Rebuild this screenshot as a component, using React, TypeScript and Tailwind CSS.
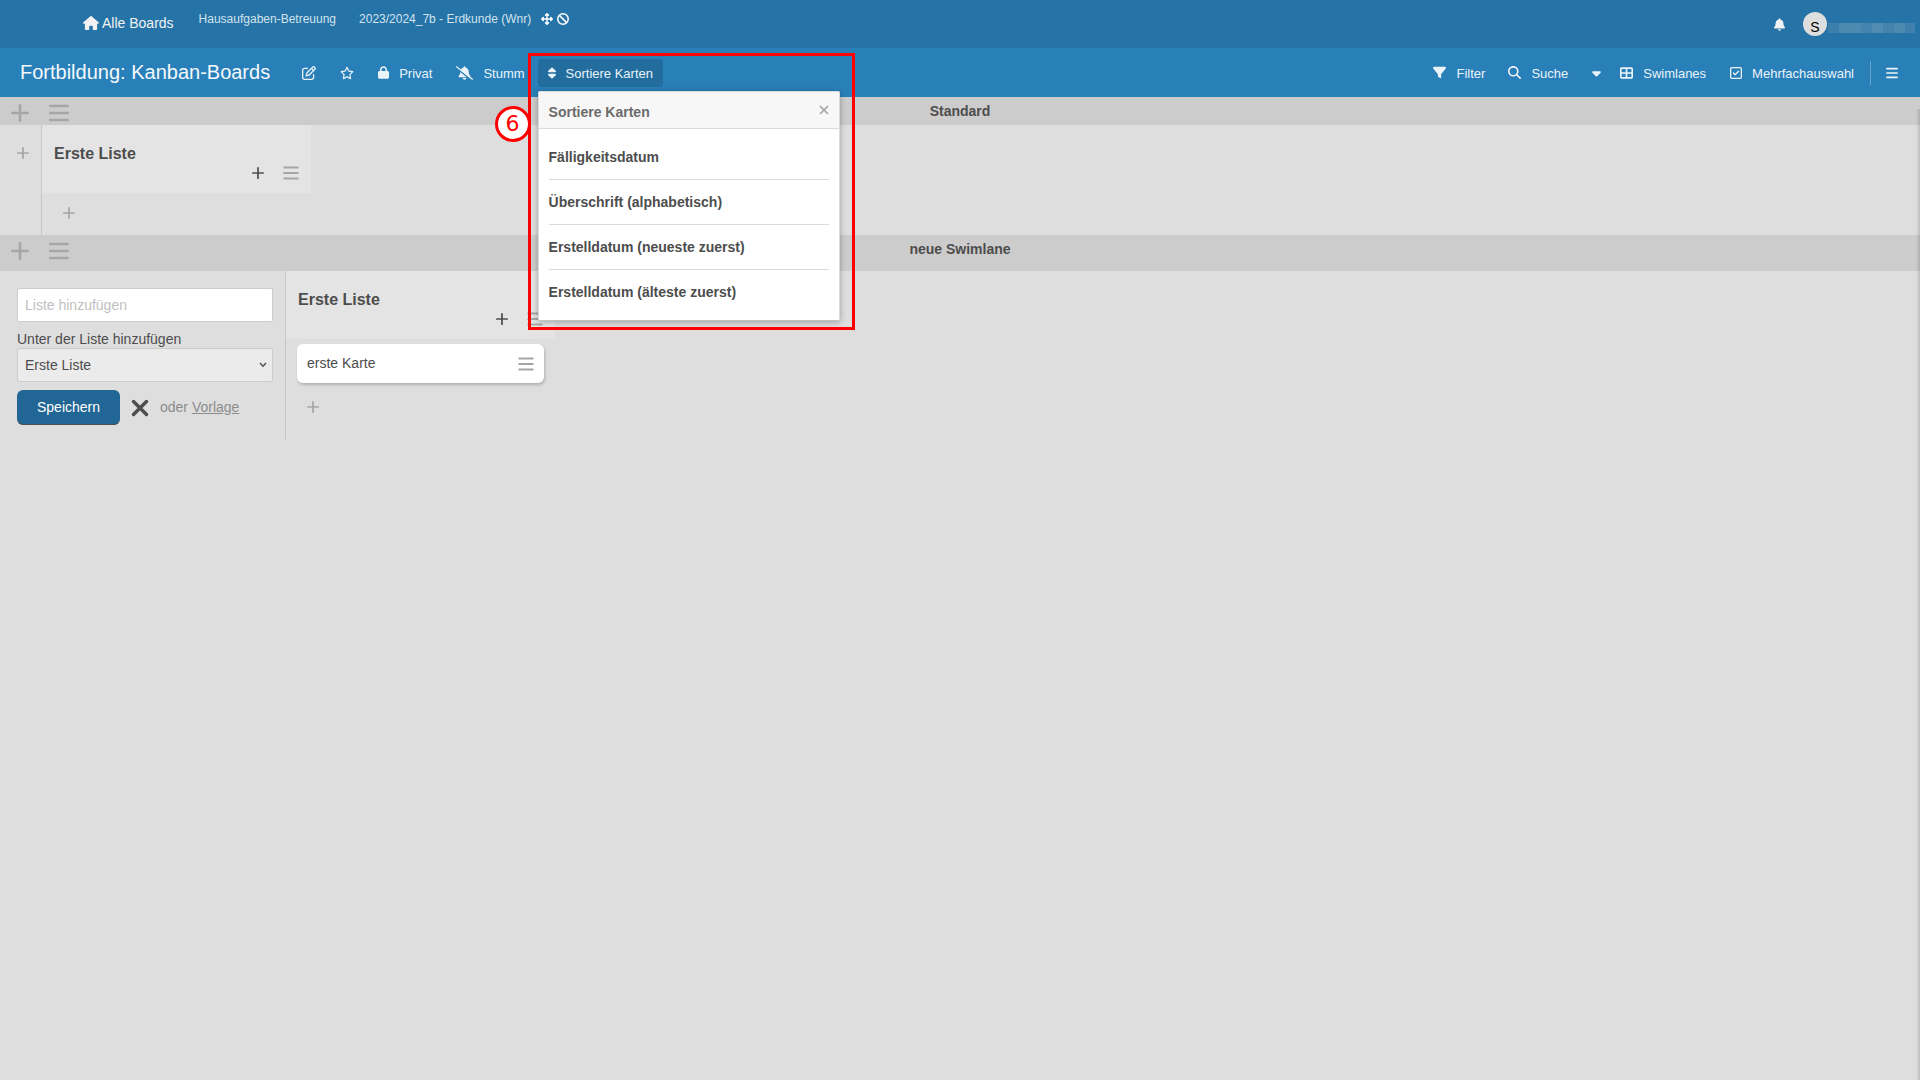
import type { ReactNode } from 'react';
import {
  FaArrowsUpDownLeftRight,
  FaBan,
  FaBars,
  FaBell,
  FaBellSlash,
  FaCaretDown,
  FaFilter,
  FaHouse,
  FaLock,
  FaMagnifyingGlass,
  FaRegPenToSquare,
  FaRegSquareCheck,
  FaRegStar,
  FaSort,
  FaTableCellsLarge,
} from 'react-icons/fa6';

const sortOptions = [
  'Fälligkeitsdatum',
  'Überschrift (alphabetisch)',
  'Erstelldatum (neueste zuerst)',
  'Erstelldatum (älteste zuerst)',
];

function PlusIcon({ className }: { className: string }) {
  return (
    <svg viewBox="0 0 18 18" className={className} fill="none" stroke="currentColor" strokeWidth="2.6" strokeLinecap="round">
      <path d="M9 1.3v15.4M1.3 9h15.4" />
    </svg>
  );
}

function MenuIcon({ className }: { className: string }) {
  return (
    <svg viewBox="0 0 20 18" className={className} fill="none" stroke="currentColor" strokeWidth="2.6" strokeLinecap="round">
      <path d="M1.3 2h17.4M1.3 9h17.4M1.3 16h17.4" />
    </svg>
  );
}

function HeaderButton({ icon, children, className = '' }: { icon: ReactNode; children?: ReactNode; className?: string }) {
  return (
    <button className={`flex h-7 items-center gap-2.5 rounded-sm px-2.5 ${className}`}>
      {icon}
      {children && <span className="pt-[3px]">{children}</span>}
    </button>
  );
}

function TopBar() {
  return (
    <nav className="flex h-12 items-start bg-[#2573a7] text-[#f2f2f2]">
      <a href="#boards" className="ml-[83px] flex items-center gap-[3px] pt-[11px] text-sm leading-6">
        <FaHouse className="h-3.5 w-4" />
        Alle Boards
      </a>
      <ul className="ml-[25px] flex items-center pt-[9px] text-xs leading-5 text-[#d3e3ee]">
        <li>
          <a href="#betreuung">Hausaufgaben-Betreuung</a>
        </li>
        <li className="ml-[23px]">
          <a href="#erdkunde">2023/2024_7b - Erdkunde (Wnr)</a>
        </li>
        <li className="ml-2.5 flex gap-1 text-white">
          <FaArrowsUpDownLeftRight className="size-3" />
          <FaBan className="size-3" />
        </li>
      </ul>
      <div className="ml-auto flex h-12 items-center pr-[5px]">
        <button aria-label="Benachrichtigungen" className="mr-[18px]">
          <FaBell className="h-[13px] w-[11px]" />
        </button>
        <span className="flex size-6 items-center justify-center rounded-full bg-[#dedede] pt-1.5 text-sm text-black">S</span>
        <span className="mt-2 ml-px flex h-2.5 w-[87px]">
          <span className="w-[11px] bg-[#3c7eac]" />
          <span className="w-[22px] bg-[#4d8ab2]" />
          <span className="w-[11px] bg-[#4583af]" />
          <span className="w-[11px] bg-[#4f8bb3]" />
          <span className="w-[11px] bg-[#4583af]" />
          <span className="w-[11px] bg-[#4d8ab2]" />
          <span className="w-2.5 bg-[#4080ac]" />
        </span>
      </div>
    </nav>
  );
}

function SortPopup() {
  return (
    <div className="absolute top-8 left-0 z-20 w-[302px] rounded-xs border border-[#dbdbdb] border-b-[#c2c2c2] bg-white text-sm font-bold text-[#4d4d4d] shadow-[0_1px_6px_rgba(0,0,0,0.3)]">
      <div className="flex h-[37px] items-center justify-between border-b border-[#dbdbdb] bg-[#f7f7f7] px-2.5">
        <h2 className="pt-1 text-[#6b6b6b]">Sortiere Karten</h2>
        <button aria-label="Schließen" className="text-[#a6a6a6]">
          <svg viewBox="0 0 10 10" className="size-2.5" stroke="currentColor" strokeWidth="1.7">
            <path d="M1 1l8 8M9 1l-8 8" />
          </svg>
        </button>
      </div>
      <ul className="divide-y divide-[#dbdbdb] px-2.5 pt-1.5 pb-1.5">
        {sortOptions.map((option) => (
          <li key={option}>
            <button className="flex h-11 w-full items-center">{option}</button>
          </li>
        ))}
      </ul>
      {/* Step marker around the opened menu */}
      <div className="pointer-events-none absolute -top-[39px] -left-[11px] h-[277px] w-[327px] border-3 border-[#f00]" />
      <div className="pointer-events-none absolute top-3.5 -left-11 flex size-9 items-center justify-center rounded-full border-3 border-[#f00] bg-white font-['DejaVu_Sans'] text-[22px] font-normal text-[#f00]">
        6
      </div>
    </div>
  );
}

function BoardHeader() {
  return (
    <header className="flex h-[49px] items-center bg-[#2980b9] text-[13px] text-[#eaf3f8]">
      <h1 className="mr-[22px] pb-0.5 pl-5 text-xl leading-6 text-[#f4f8fb]">Fortbildung: Kanban-Boards</h1>
      <HeaderButton icon={<FaRegPenToSquare className="size-3.5" />} className="mr-1" />
      <HeaderButton icon={<FaRegStar className="size-3.5" />} className="mr-1" />
      <HeaderButton icon={<FaLock className="h-[13px] w-[11px]" />} className="mr-1">Privat</HeaderButton>
      <HeaderButton icon={<FaBellSlash className="h-3.5 w-[17px]" />} className="mr-[3px]">Stumm</HeaderButton>
      <div className="relative">
        <HeaderButton icon={<FaSort className="h-3.5 w-2" />} className="bg-[#236d9e]">Sortiere Karten</HeaderButton>
        <SortPopup />
      </div>
      <div className="ml-auto flex items-center">
        <HeaderButton icon={<FaFilter className="size-[13px]" />} className="mr-[3px]">Filter</HeaderButton>
        <HeaderButton icon={<FaMagnifyingGlass className="size-[13px]" />} className="mr-1">Suche</HeaderButton>
        <HeaderButton icon={<FaCaretDown className="h-3.5 w-[9px]" />} className="-mr-px" />
        <HeaderButton icon={<FaTableCellsLarge className="h-3.5 w-[13px]" />} className="mr-1">Swimlanes</HeaderButton>
        <HeaderButton icon={<FaRegSquareCheck className="h-3.5 w-3" />}>Mehrfachauswahl</HeaderButton>
        <span className="mr-[5px] ml-1.5 h-6 w-px bg-[#69a6ce]" />
        <HeaderButton icon={<FaBars className="h-3.5 w-3" />} className="mr-3" />
      </div>
    </header>
  );
}

function SwimlaneHeader({ title, className }: { title: string; className: string }) {
  return (
    <div className={`grid grid-cols-[1fr_auto_1fr] items-start bg-[#ccc] pt-[7px] ${className}`}>
      <div className="flex items-center gap-5 pl-[11px] text-[#a6a6a6]">
        <button aria-label="Swimlane hinzufügen">
          <PlusIcon className="size-[18px]" />
        </button>
        <button aria-label="Swimlane-Menü">
          <MenuIcon className="h-[18px] w-5" />
        </button>
      </div>
      <h2 className="text-sm leading-[14px] font-bold">{title}</h2>
    </div>
  );
}

function ListHeader() {
  return (
    <div className="h-[68px] bg-[#e4e4e4] px-3 pt-[19px]">
      <h3 className="text-base leading-5 font-bold">Erste Liste</h3>
      <div className="mt-0.5 flex items-center justify-end gap-[19px] text-[#a6a6a6]">
        <button aria-label="Karte hinzufügen" className="text-[#4d4d4d]">
          <PlusIcon className="size-3" />
        </button>
        <button aria-label="Listenmenü">
          <MenuIcon className="h-3.5 w-4" />
        </button>
      </div>
    </div>
  );
}

function AddListForm() {
  return (
    <form className="w-[285px] px-[17px] py-[17px] pr-3">
      <input
        aria-label="Liste hinzufügen"
        placeholder="Liste hinzufügen"
        className="block h-[34px] w-full rounded-xs border border-[#ccc] bg-white px-[7px] placeholder:text-[#bfbfbf]"
      />
      <label htmlFor="after-list" className="mt-2 block leading-[18px]">
        Unter der Liste hinzufügen
      </label>
      <div className="relative">
        <select id="after-list" className="block h-[34px] w-full appearance-none rounded-xs border border-[#ccc] bg-[#ebebeb] px-[7px]">
          <option>Erste Liste</option>
        </select>
        <svg viewBox="0 0 8 6" className="pointer-events-none absolute top-3.5 right-1.5 h-1.5 w-2" fill="none" stroke="currentColor" strokeWidth="1.4">
          <path d="M1 1l3 3.2L7 1" />
        </svg>
      </div>
      <div className="mt-2 flex items-center text-[#8c8c8c]">
        <button type="button" className="h-[35px] w-[103px] rounded-md border-b border-[#4d4d4d] bg-[#216694] text-white">
          Speichern
        </button>
        <button type="button" aria-label="Abbrechen" className="ml-[11px] text-[#4d4d4d]">
          <svg viewBox="0 0 18 18" className="size-[18px]" stroke="currentColor" strokeWidth="3.4" strokeLinecap="round">
            <path d="M2.5 2.5l13 13M15.5 2.5l-13 13" />
          </svg>
        </button>
        <span className="ml-[11px] pb-0.5">
          oder{' '}
          <a href="#vorlage" className="underline">
            Vorlage
          </a>
        </span>
      </div>
    </form>
  );
}

export default function App() {
  return (
    <div className="flex min-h-screen flex-col bg-[#dedede] font-['Liberation_Sans',Arial,sans-serif] text-sm text-[#4d4d4d]">
      <TopBar />
      <BoardHeader />
      <main className="relative grow">
        <SwimlaneHeader title="Standard" className="h-7" />
        <section className="flex h-[110px]">
          <div className="w-[41px] pt-[22px] pl-[17px] text-[#a6a6a6]">
            <button aria-label="Liste hinzufügen" className="block">
              <PlusIcon className="size-3" />
            </button>
          </div>
          <div className="w-[270px] border-l border-[#c6c6c6]">
            <ListHeader />
            <button aria-label="Karte hinzufügen" className="mt-3.5 ml-[21px] block text-[#a6a6a6]">
              <PlusIcon className="size-3" />
            </button>
          </div>
        </section>

        <SwimlaneHeader title="neue Swimlane" className="h-9" />
        <section className="flex h-[169px]">
          <AddListForm />
          <div className="w-[270px] border-l border-[#c6c6c6]">
            <ListHeader />
            <article className="mt-[5px] mr-[11px] ml-[11px] flex h-[39px] items-center justify-between rounded-md bg-white px-2.5 shadow-[1px_2px_3px_rgba(0,0,0,0.2)]">
              <p className="pb-0.5">erste Karte</p>
              <button aria-label="Kartenmenü" className="text-[#a6a6a6]">
                <MenuIcon className="h-3.5 w-4" />
              </button>
            </article>
            <button aria-label="Karte hinzufügen" className="mt-[18px] ml-[21px] block text-[#a6a6a6]">
              <PlusIcon className="size-3" />
            </button>
          </div>
        </section>

        {/* Shadow of the closed sidebar */}
        <div className="pointer-events-none absolute top-3 right-0 bottom-0 w-1 bg-linear-to-r from-transparent to-black/15" />
      </main>
    </div>
  );
}
